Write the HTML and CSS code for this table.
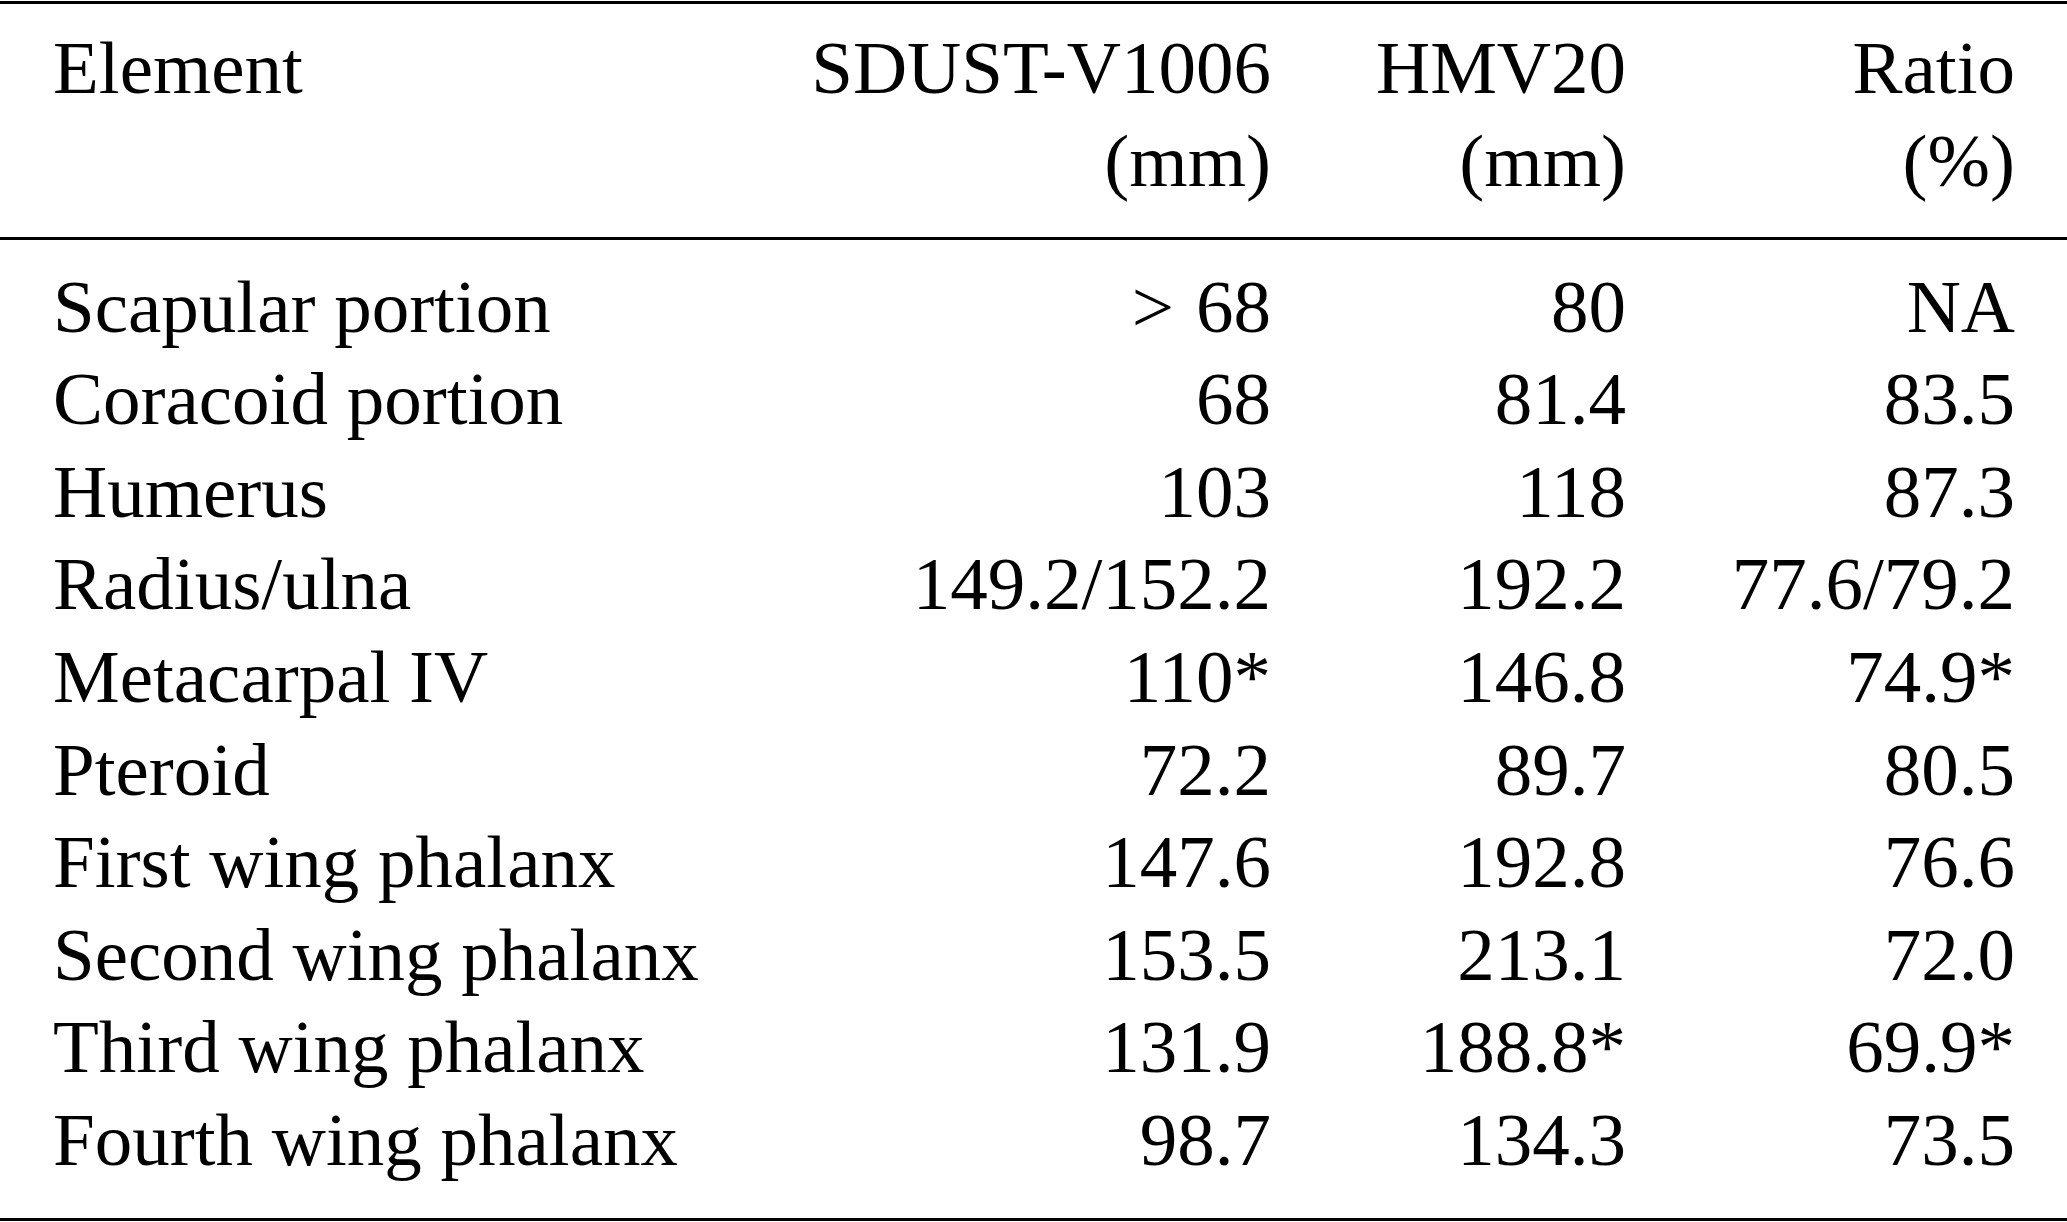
FILE: index.html
```html
<!DOCTYPE html>
<html lang="en">
<head>
<meta charset="utf-8">
<title>Element measurements</title>
<link rel="stylesheet" href="styles.css">
</head>
<body>
<div class="table">
  <div class="head">
    <div class="c l">Element</div>
    <div class="c r">SDUST-V1006<br>(mm)</div>
    <div class="c r">HMV20<br>(mm)</div>
    <div class="c r">Ratio<br>(%)</div>
  </div>
  <div class="body">
    <div class="c l">Scapular portion</div><div class="c r"><span class="gt">&gt;</span>68</div><div class="c r">80</div><div class="c r">NA</div>
    <div class="c l">Coracoid portion</div><div class="c r">68</div><div class="c r">81.4</div><div class="c r">83.5</div>
    <div class="c l">Humerus</div><div class="c r">103</div><div class="c r">118</div><div class="c r">87.3</div>
    <div class="c l">Radius/ulna</div><div class="c r">149.2/152.2</div><div class="c r">192.2</div><div class="c r">77.6/79.2</div>
    <div class="c l">Metacarpal IV</div><div class="c r">110*</div><div class="c r">146.8</div><div class="c r">74.9*</div>
    <div class="c l">Pteroid</div><div class="c r">72.2</div><div class="c r">89.7</div><div class="c r">80.5</div>
    <div class="c l">First wing phalanx</div><div class="c r">147.6</div><div class="c r">192.8</div><div class="c r">76.6</div>
    <div class="c l">Second wing phalanx</div><div class="c r">153.5</div><div class="c r">213.1</div><div class="c r">72.0</div>
    <div class="c l">Third wing phalanx</div><div class="c r">131.9</div><div class="c r">188.8*</div><div class="c r">69.9*</div>
    <div class="c l">Fourth wing phalanx</div><div class="c r">98.7</div><div class="c r">134.3</div><div class="c r">73.5</div>
  </div>
</div>
</body>
</html>
```

FILE: styles.css
```css
html, body {
  margin: 0;
  padding: 0;
  background: #ffffff;
}

body {
  width: 2067px;
  height: 1222px;
  overflow: hidden;
  color: #000000;
  font-family: "Liberation Serif", "Times New Roman", serif;
  font-size: 75px;
  line-height: 92.6px;
}

.table {
  padding-top: 1px;
}

.head,
.body {
  display: grid;
  grid-template-columns: 1fr 500px 355px 389px;
  padding-left: 53px;
  padding-right: 52px;
}

.head {
  border-top: 3px solid #000;
  border-bottom: 3px solid #000;
  padding-top: 18.4px;
  padding-bottom: 29.6px;
}

.body {
  border-bottom: 3px solid #000;
  padding-top: 20.4px;
  padding-bottom: 31.6px;
}

.c {
  white-space: nowrap;
}

.l {
  text-align: left;
}

.r {
  text-align: right;
}

.gt {
  margin-right: 22px;
}
```
